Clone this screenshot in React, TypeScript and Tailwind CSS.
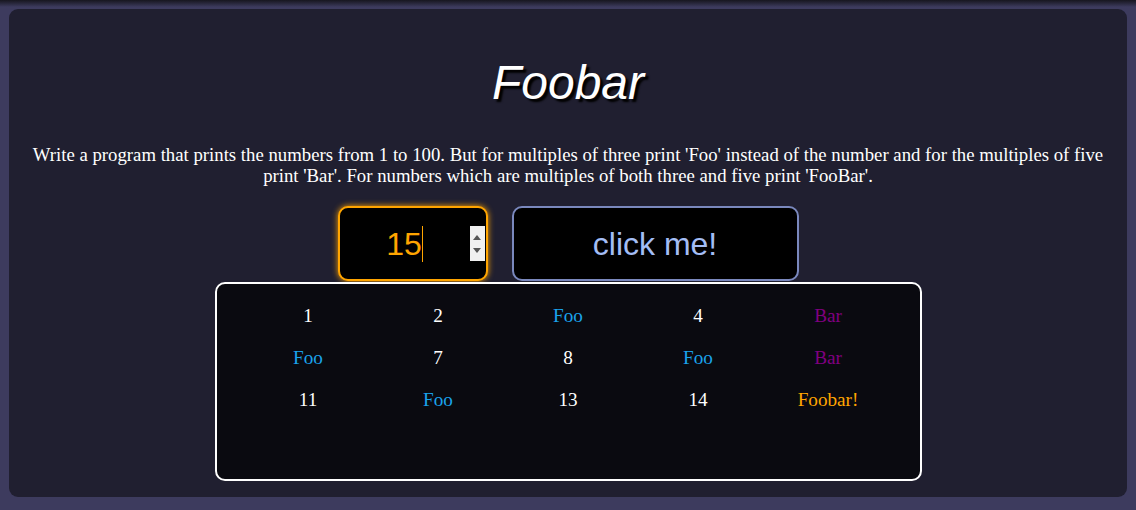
import React from "react";

const items = [
  "1", "2", "Foo", "4", "Bar",
  "Foo", "7", "8", "Foo", "Bar",
  "11", "Foo", "13", "14", "Foobar!",
];

function colorFor(v: string) {
  if (v === "Foo") return "text-[#1aa3ec]";
  if (v === "Bar") return "text-[#800080]";
  if (v === "Foobar!") return "text-[#ffa500]";
  return "text-white";
}

export default function App() {
  return (
    <div className="h-[510px] w-full bg-[#3d3b5e] p-[9px] relative">
      <div className="absolute inset-x-0 top-0 h-[7px] bg-gradient-to-b from-[#17161f] to-[#3d3b5e]" />
      <div className="relative h-[488px] rounded-[9px] bg-[#201f30] pt-[46px] flex flex-col items-center">
        <h1
          className="text-[48px] leading-[55px] italic text-white [text-shadow:3px_3px_2px_#000]"
          style={{ fontFamily: "Arial, 'Liberation Sans', sans-serif" }}
        >
          Foobar
        </h1>
        <p
          className="mt-[34px] px-[20px] text-center text-[18.75px] leading-[21px] text-white"
          style={{ fontFamily: "'Times New Roman', 'Liberation Serif', serif" }}
        >
          Write a program that prints the numbers from 1 to 100. But for multiples of three print 'Foo' instead of the
          number and for the multiples of five print 'Bar'. For numbers which are multiples of both three and five print
          'FooBar'.
        </p>
        <div
          className="mt-[20px] flex gap-[24px]"
          style={{ fontFamily: "Arial, 'Liberation Sans', sans-serif" }}
        >
          <div className="w-[150px] h-[75px] rounded-[10px] border-2 border-[#ffa500] bg-black shadow-[0_0_6px_#ffa500] flex items-center">
            <div className="flex-1 flex justify-center items-center">
              <span className="text-[32px] leading-none text-[#ffa500]">15</span>
              <span className="w-px h-[36px] bg-[#ffa500]" />
            </div>
            <div className="mr-[1px] w-[15px] h-[35px] bg-[#f0f0f0] flex flex-col items-center justify-center gap-[8px]">
              <svg width="8" height="5" viewBox="0 0 8 5">
                <path d="M0 5 L4 0 L8 5 Z" fill="#555" />
              </svg>
              <svg width="8" height="5" viewBox="0 0 8 5">
                <path d="M0 0 L4 5 L8 0 Z" fill="#555" />
              </svg>
            </div>
          </div>
          <button className="w-[287px] h-[75px] rounded-[10px] border-2 border-[#7a88bd] bg-black text-[32px] text-[#a3bdf5]">
            click me!
          </button>
        </div>
        <div
          className="mt-[1px] w-[707px] h-[199px] rounded-[10px] border-2 border-white bg-[#0a0a10] pt-[11px] flex justify-center"
          style={{ fontFamily: "'Times New Roman', 'Liberation Serif', serif" }}
        >
          <div className="grid grid-cols-[repeat(5,130px)] auto-rows-[42px] self-start">
            {items.map((v, i) => (
              <div key={i} className={`flex items-center justify-center text-[19.2px] ${colorFor(v)}`}>
                {v}
              </div>
            ))}
          </div>
        </div>
      </div>
    </div>
  );
}
